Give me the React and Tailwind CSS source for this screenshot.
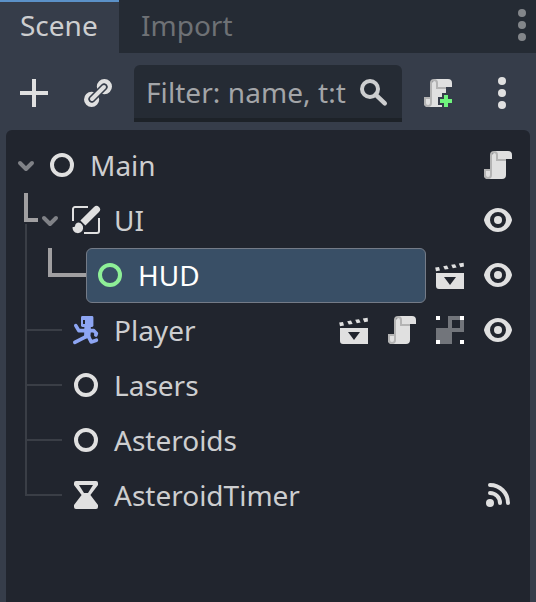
import React from "react";

function Icon({ children, className = "" }) {
  return (
    <svg viewBox="0 0 16 16" className={`h-8 w-8 shrink-0 ${className}`} fill="#e0e0e0">
      {children}
    </svg>
  );
}

const Ring = ({ color = "#e0e0e0" }) => (
  <Icon><circle cx="8" cy="8" r="5" fill="none" stroke={color} strokeWidth="2" /></Icon>
);

const Script = () => (
  <Icon>
    <path d="M6 1v1a1 1 0 0 0-1 1v10H4v-2H1v2a2 2 0 0 0 2 2h7a2 2 0 0 0 2-2V5h3V3a2 2 0 0 0-2-2z" />
    <path fill="#b4b4b4" d="M6 1a2 2 0 0 0-2 2v7H1v3a2 2 0 0 0 4 0V3a1 1 0 0 1 2 0v3h5V5H8V3a2 2 0 0 0-2-2zM2 11h2v2a1 1 0 0 1-2 0z" />
  </Icon>
);

const ScriptCreate = () => (
  <Icon>
    <path d="M6 1v1a1 1 0 0 0-1 1v10H4v-2H1v2a2 2 0 0 0 2 2h7v-1H8v-4h2V8h2V5h3V3a2 2 0 0 0-2-2z" />
    <path fill="#b4b4b4" d="M6 1a2 2 0 0 0-2 2v7H1v3a2 2 0 0 0 4 0V3a1 1 0 0 1 2 0v3h5V5H8V3a2 2 0 0 0-2-2zM2 11h2v2a1 1 0 0 1-2 0z" />
    <path fill="#6ff47d" d="M11 9h2v2h2v2h-2v2h-2v-2H9v-2h2z" />
  </Icon>
);

const Clap = () => (
  <Icon>
    <path fillRule="evenodd" d="M1 7h14v8H2.500Q1 15 1 13.500zM5 9l3 4 3-4z" />
    <path d="M.6 4.300l1.900-.3.500 1.800-2 .3zM4.600 3.600l1.900-.3.800 1.700-1.900.3zM8.600 2.900l1.900-.3.800 1.700-1.900.3zM12.400 2.300l2.400-.4.200 1.900-1.800.3z" />
  </Icon>
);

const Eye = () => (
  <Icon>
    <path fillRule="evenodd" d="M8 2C4.500 2 2 4.500 1.100 7.500a1.500 1.500 0 0 0 0 1C2 11.500 4.500 14 8 14s6-2.500 6.900-5.500a1.500 1.500 0 0 0 0-1C14 4.500 11.500 2 8 2zm0 2a4 4 0 1 1 0 8 4 4 0 0 1 0-8z" />
    <circle cx="8" cy="8" r="2" />
  </Icon>
);

const CanvasLayer = () => (
  <Icon>
    <path fill="none" stroke="#e0e0e0" d="M9 1.500H2.500a1 1 0 0 0-1 1V8.500M7 14.500h6.500a1 1 0 0 0 1-1V7" />
    <path d="M12 1.500a1.750 1.750 0 0 1 2.500 2.500L7.700 10.800 5.200 8.300zM4.200 9.300a2.650 2.650 0 1 1-2.900 2.200c.9.200 1.300-.2 1.300-1 .3-.7.900-1.100 1.600-1.200z" />
  </Icon>
);

const Player = () => (
  <Icon>
    <g fill="none" stroke="#8da5f3" strokeWidth="1.800" strokeLinecap="round" strokeLinejoin="round">
      <path d="M2.900 5.800L4.400 8.300H11.900L13.200 9.700 12.900 10.500" />
      <path d="M8 11.300L2.400 14.200M9.300 11.300L10.600 14 13.200 13.100" />
    </g>
    <rect x="5.500" y="1" width="6.200" height="5.500" rx=".7" fill="#8da5f3" />
    <path fill="#8da5f3" d="M7.200 6h3.200v3l-.3 3L7 12.300z" />
    <path fill="#21252e" d="M6.500 3h1v2h-1z" />
  </Icon>
);

const Group = () => (
  <Icon>
    <path fill="#fff" fillOpacity=".37" fillRule="evenodd" d="M7 1h8v8H9v6H1V7h6zM9 3v4h4V3z" />
    <path fill="#fff" d="M1 1h2v2H1zM13 1h2v2h-2zM1 13h2v2H1zM13 13h2v2h-2z" />
  </Icon>
);

const Timer = () => (
  <Icon>
    <path fillRule="evenodd" d="M3 1a1 1 0 0 0-1 1v1l3.800 5L2 13v1a1 1 0 0 0 1 1h10a1 1 0 0 0 1-1v-1l-3.800-5L14 3V2a1 1 0 0 0-1-1zm1.500 2h7L9 7H7z" />
  </Icon>
);

const Signals = () => (
  <Icon>
    <circle cx="4" cy="12" r="2" />
    <path fill="none" stroke="#e0e0e0" strokeWidth="2" strokeLinecap="round" d="M4 3a9 9 0 0 1 9 9M4 7a5 5 0 0 1 5 5" />
  </Icon>
);

const Dots = ({ className }) => (
  <Icon className={className}>
    <circle cx="8" cy="2" r="2" /><circle cx="8" cy="8" r="2" /><circle cx="8" cy="14" r="2" />
  </Icon>
);

const Chevron = () => (
  <svg viewBox="0 0 24 32" className="h-8 w-6 shrink-0" fill="none" stroke="#808287" strokeWidth="4" strokeLinecap="round" strokeLinejoin="round">
    <path d="M6 14l6 6 6-6" />
  </svg>
);

const rows = [
  { name: "Main", indent: "pl-2", open: true, icon: <Ring />, actions: [<Script />] },
  { name: "UI", indent: "pl-8", open: true, icon: <CanvasLayer />, actions: [<Eye />] },
  { name: "HUD", selected: true, indent: "pl-20", icon: <Ring color="#8eef97" />, actions: [<Clap />, <Eye />] },
  { name: "Player", indent: "pl-16", icon: <Player />, actions: [<Clap />, <Script />, <Group />, <Eye />] },
  { name: "Lasers", indent: "pl-16", icon: <Ring />, actions: [] },
  { name: "Asteroids", indent: "pl-16", icon: <Ring />, actions: [] },
  { name: "AsteroidTimer", indent: "pl-16", icon: <Timer />, actions: [<Signals />] },
];

function Row({ name, indent, open, selected, icon, actions }) {
  return (
    <div className={`flex h-[55px] pr-4 ${indent}`}>
      <div
        className={`flex min-w-0 flex-1 ${
          selected ? "mr-2 rounded-md border border-[#747b87] bg-[#394f66] pl-[7px] pt-[10px] text-white" : "pt-[11px]"
        }`}
      >
        {open && <Chevron />}
        {open && <span className="w-2" />}
        {icon}
        <span className="ml-3 leading-8">{name}</span>
      </div>
      <div className="flex gap-4 pt-[11px]">
        {actions.map((action, i) => <React.Fragment key={i}>{action}</React.Fragment>)}
      </div>
    </div>
  );
}

export default function App() {
  return (
    <div className="flex h-[602px] w-[536px] flex-col overflow-hidden bg-[#363d4a] font-['Noto_Sans',sans-serif] text-[28px] text-[#cdced0]">
      <div className="flex h-[53px] shrink-0 bg-[#252b34] leading-[46px]">
        <div className="w-[119px] border-t-2 border-[#5b91c8] bg-[#363d4a] pl-5">Scene</div>
        <div className="flex-1 pl-[22px] pt-0.5 text-[#6e7175]">Import</div>
        <Dots className="mr-[-2px] mt-[9px] opacity-50" />
      </div>
      <div className="flex h-[77px] shrink-0 pt-3">
        <Icon className="ml-[18px] mt-3"><path d="M7 1h2v6h6v2H9v6H7V9H1V7h6z" /></Icon>
        <Icon className="ml-8 mt-3">
          <g fill="none" stroke="#e0e0e0" strokeWidth="2.400">
            <circle cx="11.200" cy="4.800" r="2.600" />
            <circle cx="4.800" cy="11.200" r="2.600" />
            <path d="M5 11l6-6" stroke="#363d4a" strokeWidth="3.600" strokeLinecap="round" />
            <path d="M5 11l6-6" strokeWidth="2" strokeLinecap="round" />
          </g>
        </Icon>
        <div className="ml-5 flex h-[57px] w-[268px] rounded-t-md border-b-4 border-[#1d2228] bg-[#252b34] pl-3 pt-3">
          <span className="w-[212px] whitespace-nowrap leading-[31px] tracking-[0.07px] text-[#a3a5a8]">Filter: name, t:t</span>
          <Icon className="opacity-90">
            <circle cx="6" cy="6" r="4" fill="none" stroke="#e0e0e0" strokeWidth="2" />
            <path d="M8.800 8.800l4.600 4.400" stroke="#e0e0e0" strokeWidth="2.200" strokeLinecap="round" />
          </Icon>
        </div>
        <div className="ml-5 mt-3 flex gap-8"><ScriptCreate /><Dots /></div>
      </div>
      <div className="relative mx-1.5 flex-1 rounded-t-md bg-[#21252e] pt-2">
        {rows.map((row) => <Row key={row.name} {...row} />)}
        <svg className="pointer-events-none absolute left-0 top-0" width="90" height="380" viewBox="6 130 90 380" fill="none">
          <path d="M26 224v271h36M26 330h36M26 385h36M26 440h36" stroke="#3a3e46" strokeWidth="2" />
          <path d="M26 193v27h12M50 248v27h36" stroke="#a09fa1" strokeWidth="4" />
        </svg>
      </div>
    </div>
  );
}
